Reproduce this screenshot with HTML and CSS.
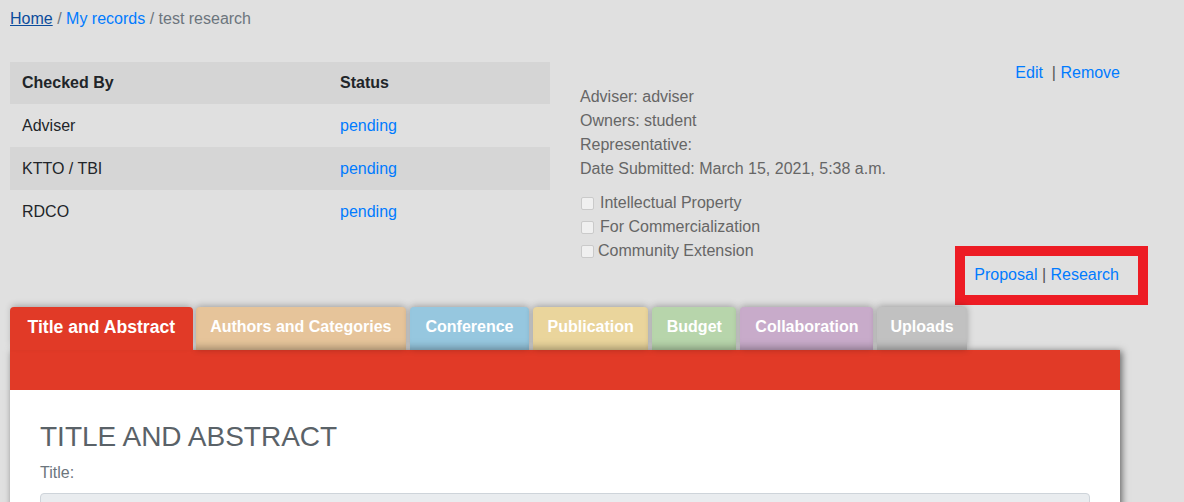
FILE: index.html
```html
<!DOCTYPE html>
<html>
<head>
<meta charset="utf-8">
<title>test research</title>
<link rel="stylesheet" href="styles.css">
</head>
<body>
<div class="page">
  <nav class="crumbs">
    <a class="home" href="#">Home</a> <span class="sep">/</span> <a class="link" href="#">My records</a> <span class="sep">/</span> <span class="current">test research</span>
  </nav>

  <div class="top">
    <table class="checks">
      <colgroup><col class="c1"><col class="c2"></colgroup>
      <thead>
        <tr><th>Checked By</th><th>Status</th></tr>
      </thead>
      <tbody>
        <tr><td>Adviser</td><td><a class="link" href="#">pending</a></td></tr>
        <tr class="striped"><td>KTTO / TBI</td><td><a class="link" href="#">pending</a></td></tr>
        <tr><td>RDCO</td><td><a class="link" href="#">pending</a></td></tr>
      </tbody>
    </table>

    <div class="side">
      <div class="actions"><a class="link" href="#">Edit</a>&nbsp; <span class="bar">|</span> <a class="link" href="#">Remove</a></div>
      <div class="info">
        <div>Adviser: adviser</div>
        <div>Owners: student</div>
        <div>Representative:</div>
        <div>Date Submitted: March 15, 2021, 5:38 a.m.</div>
      </div>
      <div class="flags">
        <div class="flag"><span class="box"></span><span class="lbl">Intellectual Property</span></div>
        <div class="flag"><span class="box"></span><span class="lbl">For Commercialization</span></div>
        <div class="flag tight"><span class="box"></span><span class="lbl">Community Extension</span></div>
      </div>
      <div class="links"><span class="marked"><a class="link" href="#">Proposal</a> <span class="bar">|</span> <a class="link" href="#">Research</a></span></div>
    </div>
  </div>

  <div class="tabs">
    <div class="tab active">Title and Abstract</div>
    <div class="tab t-authors">Authors and Categories</div>
    <div class="tab t-conf">Conference</div>
    <div class="tab t-pub">Publication</div>
    <div class="tab t-budget">Budget</div>
    <div class="tab t-collab">Collaboration</div>
    <div class="tab t-up">Uploads</div>
  </div>

  <div class="panel">
    <div class="band"></div>
    <div class="body">
      <h2 class="heading">TITLE AND ABSTRACT</h2>
      <div class="label">Title:</div>
      <div class="input"></div>
    </div>
  </div>
</div>
</body>
</html>
```

FILE: styles.css
```css
* { box-sizing: border-box; }
html, body {
  margin: 0;
  padding: 0;
  background: #e0e0e0;
  font-family: "Liberation Sans", Arial, sans-serif;
  font-size: 16px;
  line-height: 24px;
  color: #212529;
  overflow: hidden;
}
.page {
  padding: 6px 64px 0 10px;
}
.crumbs { color: #6c757d; padding-top: 1px; }
.crumbs .home { color: #0b4c9c; text-decoration: underline; }
.link { color: #007bff; text-decoration: none; }
.sep, .current { color: #6c757d; }

.top {
  display: flex;
  gap: 30px;
  margin-top: 29px;
}
.checks {
  width: 540px;
  margin-top: 2px;
  border-collapse: collapse;
  table-layout: fixed;
  align-self: flex-start;
}
.checks .c1 { width: 318px; }
.checks .c2 { width: 222px; }
.checks th {
  text-align: left;
  font-weight: bold;
  background: #d5d5d5;
  padding: 9px 12px;
  height: 42px;
}
.checks td {
  padding: 10px 12px 9px;
  height: 43px;
}
.checks tr.striped td { background: #d6d6d6; }

.side {
  width: 540px;
  color: #666;
  padding-top: 1px;
}
.actions { text-align: right; }
.bar { color: #555; }
.flags { margin-top: 10px; }
.flag {
  display: flex;
  align-items: center;
}
.box {
  width: 13px;
  height: 13px;
  margin: 1px 6px 0 1px;
  background: #f0f0f0;
  border: 1px solid #cacaca;
  border-radius: 2px;
}
.flag.tight .box { margin-right: 4px; }
.links { text-align: right; }
.marked {
  position: relative;
  display: inline-block;
  padding-right: 1px;
}
.marked::after {
  content: "";
  position: absolute;
  left: -19px;
  top: -17px;
  right: -28px;
  bottom: -18px;
  border: 10px solid #ed1c24;
  pointer-events: none;
}

.tabs {
  display: flex;
  gap: 4px;
  margin-top: 20px;
  position: relative;
  z-index: 2;
}
.tab {
  height: 43px;
  padding: 10px 15px 13px 15px;
  line-height: 20px;
  color: #fff;
  font-weight: bold;
  border-radius: 4px 4px 0 0;
  box-shadow: 0 -1px 7px rgba(0, 0, 0, 0.3), inset 0 -10px 9px -8px rgba(0, 0, 0, 0.35);
}
.tab.active {
  background: #e13a27;
  font-size: 17.6px;
  padding: 10px 17.5px 13px 17.5px;
  margin-right: -1px;
  box-shadow: 0 -3px 7px -2px rgba(0, 0, 0, 0.3);
  position: relative;
  z-index: 3;
}
.t-authors { background: #e6c49a; padding-left: 14.5px; padding-right: 14.5px; }
.t-conf { background: #96c7df; padding-left: 15.5px; padding-right: 15.5px; }
.t-pub { background: #ead59c; padding-left: 14.5px; padding-right: 14.5px; }
.t-budget { background: #b7d5ab; padding-left: 14.5px; padding-right: 14.5px; }
.t-collab { background: #c8abca; }
.t-up { background: #c1c1c1; padding-left: 13px; padding-right: 13px; }

.panel {
  width: 1110px;
  position: relative;
  z-index: 1;
  box-shadow: 2px 1px 7px rgba(0, 0, 0, 0.55);
  background: #fff;
}
.band {
  height: 40px;
  background: #e13a27;
  position: relative;
  z-index: 4;
}
.body {
  padding: 30px 30px 40px;
  min-height: 200px;
}
.heading {
  margin: 0 0 7px;
  font-size: 28px;
  line-height: 33.6px;
  font-weight: normal;
  color: #5a6268;
}
.label {
  color: #6c757d;
  margin-bottom: 8px;
}
.input {
  height: 38px;
  background: #e9ecef;
  border: 1px solid #ced4da;
  border-radius: 4px;
}
```
